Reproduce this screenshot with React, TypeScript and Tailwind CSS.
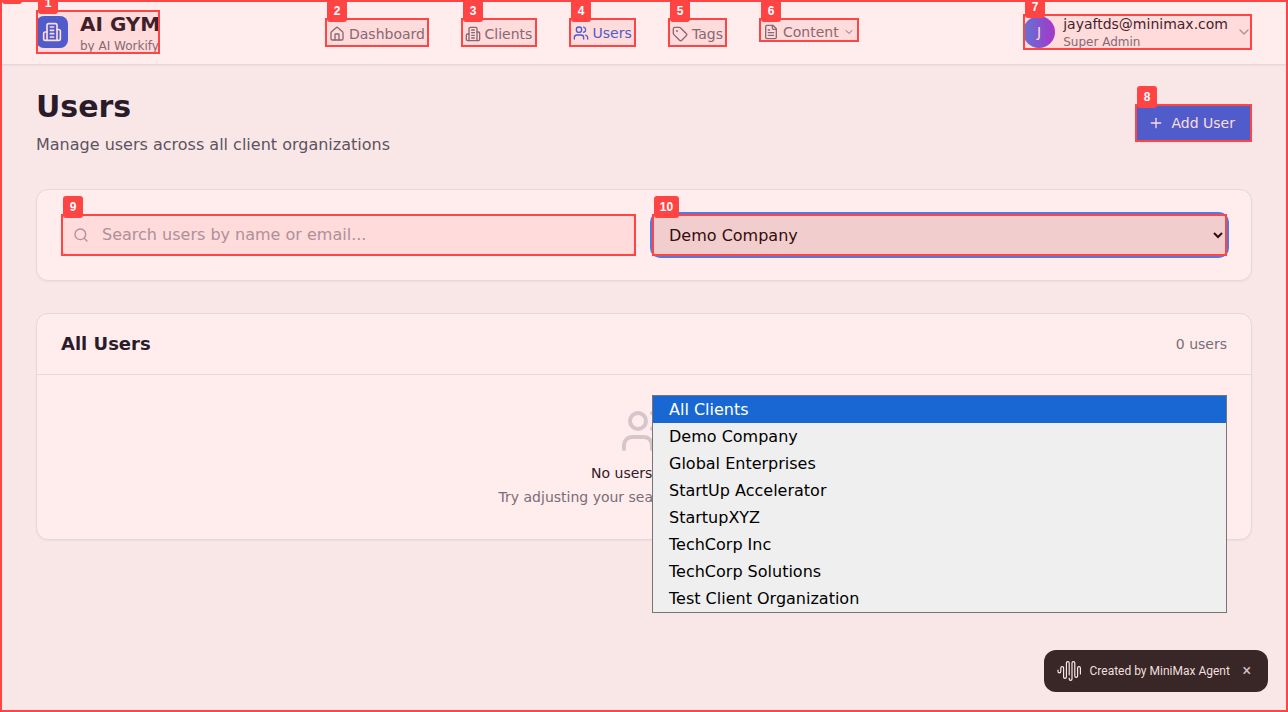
import type { ReactNode } from 'react';
import { ChevronDown, House, Plus, Search, Tag } from 'lucide-react';

function Icon({ className, children }: { className: string; children: ReactNode }) {
  return (
    <svg viewBox="0 0 24 24" fill="none" stroke="currentColor" strokeWidth="2" strokeLinecap="round" strokeLinejoin="round" className={className}>
      {children}
    </svg>
  );
}

function BuildingIcon({ className }: { className: string }) {
  return (
    <Icon className={className}>
      <path d="M6 22V4a2 2 0 0 1 2-2h8a2 2 0 0 1 2 2v18Z" />
      <path d="M6 12H4a2 2 0 0 0-2 2v6a2 2 0 0 0 2 2h2" />
      <path d="M18 9h2a2 2 0 0 1 2 2v9a2 2 0 0 1-2 2h-2" />
      <path d="M10 6h4M10 10h4M10 14h4M10 18h4" />
    </Icon>
  );
}

function UsersIcon({ className }: { className: string }) {
  return (
    <Icon className={className}>
      <path d="M16 21v-2a4 4 0 0 0-4-4H6a4 4 0 0 0-4 4v2" />
      <circle cx="9" cy="7" r="4" />
      <path d="M22 21v-2a4 4 0 0 0-3-3.87M16 3.13a4 4 0 0 1 0 7.75" />
    </Icon>
  );
}

function FileIcon({ className }: { className: string }) {
  return (
    <Icon className={className}>
      <path d="M15 2H6a2 2 0 0 0-2 2v16a2 2 0 0 0 2 2h12a2 2 0 0 0 2-2V7Z" />
      <path d="M14 2v4a2 2 0 0 0 2 2h4M10 9H8M16 13H8M16 17H8" />
    </Icon>
  );
}

const clients = [
  'All Clients',
  'Demo Company',
  'Global Enterprises',
  'StartUp Accelerator',
  'StartupXYZ',
  'TechCorp Inc',
  'TechCorp Solutions',
  'Test Client Organization',
];

const marks = [
  { id: '0', x: 0, y: 0, w: 1288, h: 712 },
  { id: '1', x: 36, y: 10, w: 124, h: 44 },
  { id: '2', x: 325, y: 18, w: 104, h: 29 },
  { id: '3', x: 461, y: 18, w: 76, h: 29 },
  { id: '4', x: 569, y: 18, w: 67, h: 29 },
  { id: '5', x: 668, y: 18, w: 59, h: 29 },
  { id: '6', x: 759, y: 18, w: 100, h: 24 },
  { id: '7', x: 1023, y: 14, w: 229, h: 36 },
  { id: '8', x: 1135, y: 104, w: 117, h: 38 },
  { id: '9', x: 61, y: 214, w: 575, h: 42 },
  { id: '10', x: 652, y: 214, w: 575, h: 42 },
];

function Marks() {
  return (
    <div className="pointer-events-none absolute inset-0 overflow-hidden">
      {marks.map((m) => (
        <div
          key={m.id}
          className="absolute border-2 border-[#ff4444] bg-[#ff4444]/10"
          style={{ left: m.x, top: m.y, width: m.w, height: m.h }}
        />
      ))}
      {marks.map((m) => (
        <div
          key={m.id}
          className="absolute flex h-[22px] items-center justify-center rounded-[3px] bg-[#ff4444] font-['Liberation_Sans',sans-serif] text-[12px] font-bold text-white"
          style={{ left: m.x + 2, top: m.y - 18, width: m.id.length > 1 ? 25 : 20 }}
        >
          {m.id}
        </div>
      ))}
    </div>
  );
}

function Header() {
  return (
    <header className="border-b border-[#e5e7eb] bg-white shadow-xs">
      <div className="mx-auto flex h-16 max-w-7xl items-center px-8">
        <div className="flex w-[289px] shrink-0 items-center gap-3">
          <div className="flex size-8 items-center justify-center rounded-lg bg-[#2563eb] text-white">
            <BuildingIcon className="size-5" />
          </div>
          <div>
            <div className="text-xl leading-7 font-bold whitespace-nowrap text-[#111827]">AI GYM</div>
            <div className="text-xs leading-4 text-[#6b7280]">by AI Workify</div>
          </div>
        </div>
        <nav className="flex gap-8 text-sm text-[#6b7280]">
          <a className="flex w-[104px] items-center gap-1 px-1 pt-1"><House className="size-4 shrink-0" />Dashboard</a>
          <a className="flex w-[76px] items-center gap-[3.5px] px-1 pt-1"><BuildingIcon className="size-4 shrink-0" />Clients</a>
          <a className="flex w-[67px] items-center gap-[3.5px] px-1 pt-0.5 text-[#2563eb]"><UsersIcon className="size-4 shrink-0" />Users</a>
          <a className="flex w-[59px] items-center gap-1 px-1 pt-1"><Tag className="size-4 shrink-0" />Tags</a>
          <button className="flex w-[100px] items-center gap-1 px-1"><FileIcon className="size-4 shrink-0" />Content<ChevronDown className="ml-auto size-3 shrink-0" /></button>
        </nav>
        <div className="ml-auto flex items-center gap-2">
          <div className="flex size-8 items-center justify-center rounded-full bg-[linear-gradient(to_right,#3b82f6,#9333ea)] text-sm text-white">J</div>
          <div>
            <div className="text-sm leading-5 text-[#111827]">jayaftds@minimax.com</div>
            <div className="text-xs leading-4 text-[#6b7280]">Super Admin</div>
          </div>
          <ChevronDown className="size-4 text-[#9ca3af]" />
        </div>
      </div>
    </header>
  );
}

export default function App() {
  return (
    <div className="relative h-[712px] overflow-hidden bg-[#f9fafb] font-['DejaVu_Sans',sans-serif]">
      <Header />
      <main className="mx-auto flex max-w-7xl flex-col gap-8 px-8 pt-6">
        <div className="flex items-center justify-between">
          <div>
            <h1 className="text-3xl leading-9 font-bold text-[#111827]">Users</h1>
            <p className="mt-2 text-base leading-6 text-[#4b5563]">Manage users across all client organizations</p>
          </div>
          <button className="flex h-[38px] w-[117px] items-center rounded-md bg-[#2563eb] pl-[12.5px] text-sm whitespace-nowrap text-white shadow-xs">
            <Plus className="mr-2 size-4" />Add User
          </button>
        </div>

        <section className="grid grid-cols-2 gap-4 rounded-xl border border-[#e5e7eb] bg-white p-6 shadow-xs">
          <label className="flex h-[42px] items-center rounded-lg border border-[#d1d5db] bg-white pl-[11px]">
            <Search className="size-4 shrink-0 text-[#9ca3af]" />
            <input placeholder="Search users by name or email..." className="ml-[13px] w-full outline-none placeholder:text-[#9ca3af]" />
          </label>
          <select defaultValue="Demo Company" className="h-[42px] w-full rounded-lg border border-transparent bg-[#efefef] px-3 text-base text-black ring-2 ring-[#3b82f6] outline-none">
            {clients.map((c) => <option key={c}>{c}</option>)}
          </select>
        </section>

        <section className="rounded-xl border border-[#e5e7eb] bg-white shadow-xs">
          <div className="flex items-center justify-between border-b border-[#e5e7eb] px-6 py-4">
            <h2 className="text-lg leading-7 font-bold text-[#111827]">All Users</h2>
            <span className="text-sm text-[#6b7280]">0 users</span>
          </div>
          <div className="flex flex-col items-center py-8 text-sm">
            <UsersIcon className="size-12 text-[#d1d5db]" />
            <h3 className="mt-2 leading-5 text-[#111827]">No users found</h3>
            <p className="mt-1 leading-5 text-[#6b7280]">Try adjusting your search or filter criteria.</p>
          </div>
        </section>
      </main>

      <div className="absolute right-5 bottom-5 flex h-[42px] w-[224px] items-center rounded-xl bg-[#232323] pl-[13px] font-[Roboto,sans-serif] text-xs text-white">
        <svg viewBox="0 0 25 22" className="h-[22px] w-[25px] shrink-0" fill="none" stroke="currentColor" strokeWidth="1.15" strokeLinecap="round">
          <path d="M1 10v1.4a1.4 1.4 0 0 0 2.8 0V8a1.4 1.4 0 0 1 2.8 0v9a1.4 1.4 0 0 0 2.8 0V3a1.4 1.4 0 0 1 2.8 0v12" />
          <path d="M12.2 18v1a1.4 1.4 0 0 0 2.8 0V3a1.4 1.4 0 0 1 2.8 0v13a1.4 1.4 0 0 0 2.8 0V8a1.4 1.4 0 0 1 2.8 0v6" />
        </svg>
        <span className="ml-[7.5px] w-[141px] whitespace-nowrap text-white/95">Created by MiniMax Agent</span>
        <span className="ml-3 text-base leading-none text-white/80">×</span>
      </div>

      <Marks />

      <div className="absolute top-[395px] left-[652px] w-[575px] border border-[#767676] bg-[#efefef] text-base text-black">
        {clients.map((c, i) => (
          <div key={c} className={i === 0 ? 'h-[27px] bg-[#1967d2] pl-4 leading-[27px] text-white' : 'h-[27px] pl-4 leading-[27px]'}>{c}</div>
        ))}
      </div>
    </div>
  );
}
